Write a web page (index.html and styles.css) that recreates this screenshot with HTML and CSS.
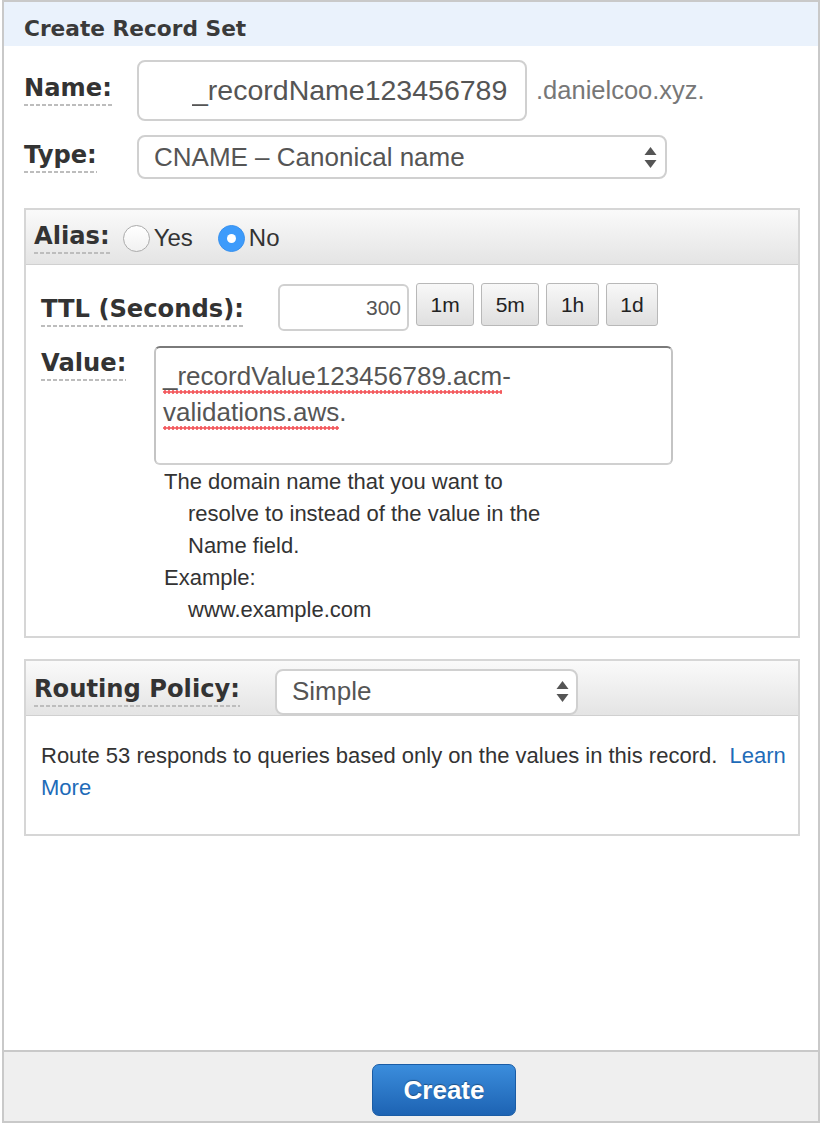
FILE: index.html
```html
<!DOCTYPE html>
<html lang="en">
<head>
<meta charset="utf-8">
<title>Create Record Set</title>
<link rel="stylesheet" href="styles.css">
</head>
<body>
<div class="dialog">
  <div class="dialog-title">Create Record Set</div>
  <div class="dialog-main">
    <div class="field-row name-row">
      <div class="label-col"><span class="label">Name:</span></div>
      <input class="text-input name-input" type="text" value="_recordName123456789">
      <span class="suffix">.danielcoo.xyz.</span>
    </div>
    <div class="field-row type-row">
      <div class="label-col"><span class="label">Type:</span></div>
      <div class="select type-select">
        <span class="select-text">CNAME – Canonical name</span>
        <svg class="select-arrows" width="13" height="23" viewBox="0 0 13 23"><path d="M6.5 1 L12.5 9 H0.5 Z M0.5 14 H12.5 L6.5 22 Z" fill="#555"/></svg>
      </div>
    </div>

    <section class="panel alias-panel">
      <div class="panel-head alias-head">
        <span class="label">Alias:</span>
        <span class="radio-opt"><span class="radio"></span><span class="radio-text">Yes</span></span>
        <span class="radio-opt"><span class="radio checked"></span><span class="radio-text">No</span></span>
      </div>
      <div class="panel-body">
        <div class="ttl-row">
          <div class="ttl-label-col"><span class="label">TTL (Seconds):</span></div>
          <input class="text-input ttl-input" type="text" value="300">
          <button class="ttl-btn">1m</button>
          <button class="ttl-btn">5m</button>
          <button class="ttl-btn">1h</button>
          <button class="ttl-btn">1d</button>
        </div>
        <div class="value-row">
          <div class="label-col value-label-col"><span class="label">Value:</span></div>
          <div class="value-col">
            <div class="textarea"><span class="misspelled">_recordValue123456789.acm</span>-<span class="misspelled">validations.aws</span>.</div>
            <div class="help">
              <p>The domain name that you want to resolve to instead of the value in the Name field.</p>
              <p>Example: <br>www.example.com</p>
            </div>
          </div>
        </div>
      </div>
    </section>

    <section class="panel routing-panel">
      <div class="panel-head routing-head">
        <span class="label">Routing Policy:</span>
        <div class="select routing-select">
          <span class="select-text">Simple</span>
          <svg class="select-arrows" width="13" height="23" viewBox="0 0 13 23"><path d="M6.5 1 L12.5 9 H0.5 Z M0.5 14 H12.5 L6.5 22 Z" fill="#555"/></svg>
        </div>
      </div>
      <div class="panel-body routing-body">
        Route 53 responds to queries based only on the values in this record.&nbsp; <a href="#" class="link">Learn</a> <a href="#" class="link">More</a>
      </div>
    </section>
  </div>
  <div class="dialog-footer">
    <button class="primary-btn">Create</button>
  </div>
</div>
</body>
</html>
```

FILE: styles.css
```css
html, body {
  margin: 0;
  padding: 0;
  background: #ffffff;
}

body {
  font-family: "Liberation Sans", Arial, sans-serif;
  color: #333333;
}

.dialog {
  margin: 0 2px;
  height: 1123px;
  box-sizing: border-box;
  border: 2px solid #c9c9c9;
  display: flex;
  flex-direction: column;
}

.dialog-title {
  height: 44px;
  box-sizing: border-box;
  padding: 8px 0 0 20px;
  display: flex;
  align-items: center;
  background: #eaf2fc;
  font-family: "DejaVu Sans", Verdana, sans-serif;
  font-weight: bold;
  font-size: 21.7px;
  color: #3a3a3a;
}

.dialog-main {
  flex: 1;
  padding: 14px 18px 0 20px;
}

.label {
  display: inline-block;
  font-family: "DejaVu Sans", Verdana, sans-serif;
  font-weight: bold;
  font-size: 24.2px;
  line-height: 27px;
  color: #333333;
  padding-bottom: 4px;
  background-image: linear-gradient(to right, #bdbdbd 65%, transparent 65%);
  background-size: 6px 2px;
  background-repeat: repeat-x;
  background-position: left bottom;
}

.field-row {
  display: flex;
  align-items: center;
}

.label-col {
  width: 113px;
  flex: none;
}

.text-input {
  box-sizing: border-box;
  border: 2px solid #d0d0d0;
  background: #ffffff;
  font-family: "Liberation Sans", Arial, sans-serif;
  color: #555555;
  outline: none;
  margin: 0;
}

.name-input {
  width: 390px;
  height: 61px;
  border-radius: 8px;
  padding: 0 15px 0 53px;
  font-size: 28.5px;
}

.suffix {
  margin-left: 9px;
  font-size: 25.5px;
  color: #777777;
  margin-top: -1px;
}

.type-row {
  margin-top: 14px;
}

.select {
  box-sizing: border-box;
  display: flex;
  align-items: center;
  justify-content: space-between;
  border: 2px solid #d0d0d0;
  border-radius: 8px;
  background: #ffffff;
  color: #555555;
  font-size: 26px;
}

.type-select {
  width: 530px;
  height: 44px;
  padding: 0 8px 0 15px;
}

.select-arrows {
  display: block;
  flex: none;
}

.panel {
  border: 2px solid #d6d6d6;
  background: #ffffff;
}

.alias-panel {
  margin-top: 29px;
}

.routing-panel {
  margin-top: 21px;
}

.panel-head {
  height: 55px;
  box-sizing: border-box;
  display: flex;
  align-items: center;
  padding-left: 8px;
  background: linear-gradient(#fafafa, #e4e4e4);
  border-bottom: 1px solid #d0d0d0;
}

.alias-head {
  padding-top: 2px;
}

.radio-opt {
  display: flex;
  align-items: center;
  margin-left: 13px;
}

.radio-opt + .radio-opt {
  margin-left: 25px;
}

.radio {
  width: 27px;
  height: 27px;
  box-sizing: border-box;
  border-radius: 50%;
  border: 1px solid #ababab;
  background: linear-gradient(#ffffff, #f1f1f1);
  display: flex;
  align-items: center;
  justify-content: center;
}

.radio.checked {
  background: #3d9bfb;
  border-color: #3891ee;
}

.radio.checked::after {
  content: "";
  width: 9px;
  height: 9px;
  border-radius: 50%;
  background: #ffffff;
}

.radio-text {
  margin-left: 4px;
  font-size: 24px;
  color: #333333;
}

.panel-body {
  padding: 19px 15px 10px 15px;
}

.ttl-row {
  display: flex;
  align-items: flex-start;
}

.ttl-label-col {
  width: 237px;
  flex: none;
  padding-top: 12px;
}

.ttl-input {
  width: 131px;
  height: 47px;
  border-radius: 6px;
  text-align: right;
  padding: 0 6px 0 6px;
  font-size: 21px;
}

.ttl-btn {
  margin: -1px 0 0 7px;
  height: 43px;
  padding: 0 13.5px;
  box-sizing: border-box;
  border: 1px solid #b8b8b8;
  border-radius: 3px;
  background: linear-gradient(#f8f8f8, #dfdfdf);
  font-family: "Liberation Sans", Arial, sans-serif;
  font-size: 21px;
  color: #222222;
}

.value-row {
  display: flex;
  align-items: flex-start;
  margin-top: 15px;
}

.value-label-col {
  padding-top: 4px;
}

.value-col {
  flex: none;
}

.textarea {
  width: 519px;
  height: 119px;
  box-sizing: border-box;
  border: 2px solid;
  border-color: #7a7a7a #c4c4c4 #d0d0d0 #c4c4c4;
  border-radius: 6px;
  padding: 10px 7px 6px;
  font-size: 26px;
  line-height: 36px;
  color: #555555;
}

.misspelled {
  padding-bottom: 3px;
  background-image: radial-gradient(circle, #f35b5f 1.5px, transparent 2px);
  background-size: 4px 4px;
  background-repeat: repeat-x;
  background-position: 0 100%;
}

.help {
  width: 396px;
  margin: 1px 0 0 10px;
  font-size: 22px;
  line-height: 32px;
  color: #333333;
}

.help p {
  margin: 0;
  padding-left: 24px;
  text-indent: -24px;
}

.routing-head {
  padding-top: 7px;
}

.routing-select {
  width: 303px;
  height: 46px;
  margin-left: 35px;
  padding: 0 7px 0 15px;
}

.routing-body {
  padding: 24px 10px 30px 15px;
  font-size: 22px;
  line-height: 32px;
  color: #333333;
}

.link {
  color: #1e6bb8;
  text-decoration: none;
}

.dialog-footer {
  height: 71px;
  box-sizing: border-box;
  border-top: 2px solid #c9c9c9;
  background: #efefef;
  display: flex;
  justify-content: center;
  align-items: flex-start;
  padding: 12px 0 0 66px;
}

.primary-btn {
  width: 144px;
  height: 52px;
  box-sizing: border-box;
  border: 1px solid #1a5ca5;
  border-radius: 7px;
  background: linear-gradient(#3b8ddc, #1d63b3);
  color: #ffffff;
  font-family: "Liberation Sans", Arial, sans-serif;
  font-weight: bold;
  font-size: 26px;
  text-shadow: 0 -1px 1px rgba(0, 0, 0, 0.35);
  padding: 0;
}
```
